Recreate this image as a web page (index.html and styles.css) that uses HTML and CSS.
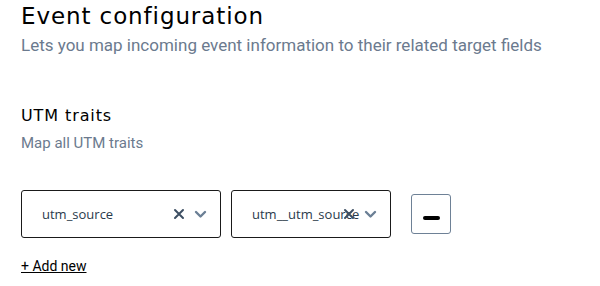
FILE: index.html
```html
<!DOCTYPE html>
<html>
<head>
<meta charset="utf-8">
<link rel="stylesheet" href="styles.css">
</head>
<body>
<div class="page">
  <header class="header">
    <h1 class="title">Event configuration</h1>
    <p class="subtitle">Lets you map incoming event information to their related target fields</p>
  </header>
  <section class="section">
    <h2 class="section-title">UTM traits</h2>
    <p class="section-desc">Map all UTM traits</p>
    <div class="row">
      <div class="select select-wide">
        <span class="select-value">utm_source</span>
        <span class="select-icons">
          <svg class="icon-x" width="12" height="12" viewBox="0 0 12 12"><path d="M2 2 L10 10 M10 2 L2 10" stroke="#3d4f63" stroke-width="2" stroke-linecap="round"/></svg>
          <svg class="icon-chev" width="13" height="9" viewBox="0 0 13 9"><path d="M2 2 L6.5 6.5 L11 2" stroke="#6b7f95" stroke-width="2.4" fill="none" stroke-linecap="round" stroke-linejoin="round"/></svg>
        </span>
      </div>
      <div class="select select-narrow">
        <span class="select-value">utm__utm_source</span>
        <span class="select-icons">
          <svg class="icon-x" width="12" height="12" viewBox="0 0 12 12"><path d="M2 2 L10 10 M10 2 L2 10" stroke="#3d4f63" stroke-width="2" stroke-linecap="round"/></svg>
          <svg class="icon-chev" width="13" height="9" viewBox="0 0 13 9"><path d="M2 2 L6.5 6.5 L11 2" stroke="#6b7f95" stroke-width="2.4" fill="none" stroke-linecap="round" stroke-linejoin="round"/></svg>
        </span>
      </div>
      <button class="remove-btn" aria-label="Remove"><span class="minus"></span></button>
    </div>
    <a class="add-link" href="#">+ Add new</a>
  </section>
</div>
</body>
</html>
```
FILE: styles.css
```css
* { box-sizing: border-box; }
html, body { margin: 0; padding: 0; background: #ffffff; }
.page { padding: 2px 21px 0 21px; }
.header { margin: 0; }
.title {
  margin: 0;
  font-family: "DejaVu Sans", "Inter", sans-serif;
  font-weight: 400;
  font-size: 23px;
  line-height: 28px;
  letter-spacing: 0.9px;
  color: #000000;
}
.subtitle {
  margin: 5px 0 0 0;
  font-family: "Roboto", sans-serif;
  font-size: 17px;
  line-height: 20px;
  color: #6b7a8e;
}
.section { margin-top: 50px; }
.section-title {
  margin: 0;
  font-family: "DejaVu Sans", "Inter", sans-serif;
  font-weight: 400;
  font-size: 16px;
  line-height: 22px;
  letter-spacing: 0.9px;
  color: #000000;
}
.section-desc {
  margin: 7px 0 0 0;
  font-family: "Roboto", sans-serif;
  font-size: 15px;
  line-height: 18px;
  color: #6b7a8e;
}
.row {
  display: flex;
  align-items: center;
  gap: 10px;
  margin-top: 38px;
}
.select {
  height: 48px;
  border: 1px solid #1a1a1a;
  border-radius: 3px;
  display: flex;
  align-items: center;
  position: relative;
  padding-left: 20px;
  font-family: "Open Sans", sans-serif;
  font-size: 13px;
  color: #2a3a4c;
}
.select-wide { width: 200px; }
.select-narrow { width: 160px; }
.select-value { white-space: nowrap; }
.select-icons {
  position: absolute;
  right: 13px;
  top: 0;
  bottom: 0;
  display: flex;
  align-items: center;
  gap: 9px;
}
.remove-btn {
  margin-left: 10px;
  width: 40px;
  height: 40px;
  border: 1px solid #6e8196;
  border-radius: 3px;
  background: #ffffff;
  display: flex;
  align-items: center;
  justify-content: center;
  padding: 0;
}
.minus {
  display: block;
  width: 17px;
  height: 4px;
  border-radius: 2px;
  background: #000000;
  margin-top: 7px;
}
.add-link {
  display: inline-block;
  margin-top: 19px;
  font-family: "Roboto", sans-serif;
  font-size: 14px;
  line-height: 18px;
  color: #000000;
  text-decoration: underline;
}
```
